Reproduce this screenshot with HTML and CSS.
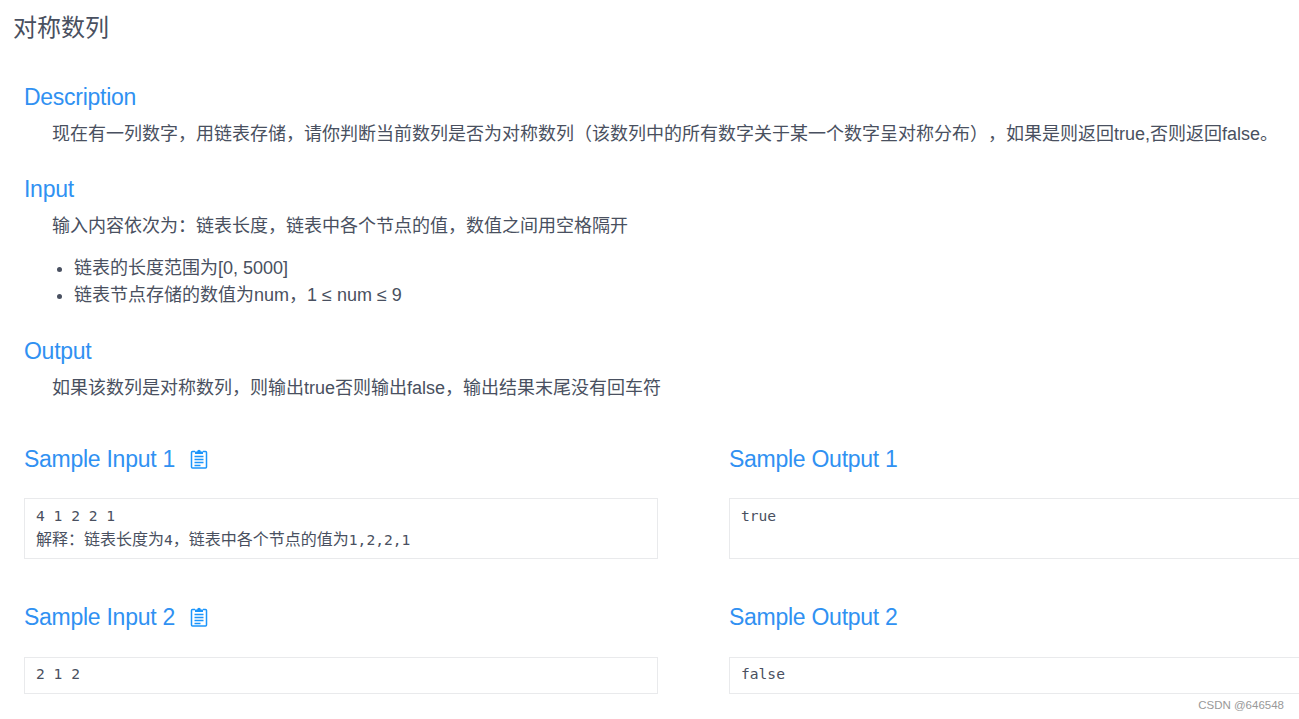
FILE: index.html
```html
<!DOCTYPE html>
<html lang="zh">
<head>
<meta charset="utf-8">
<title>对称数列</title>
<link rel="stylesheet" href="styles.css">
</head>
<body>
<main class="panel">
  <h1 class="title">对称数列</h1>
  <div class="content">
    <section class="block">
      <h2 class="heading">Description</h2>
      <p class="text">现在有一列数字，用链表存储，请你判断当前数列是否为对称数列（该数列中的所有数字关于某一个数字呈对称分布），如果是则返回true,否则返回false。</p>
    </section>
    <section class="block">
      <h2 class="heading">Input</h2>
      <p class="text">输入内容依次为：链表长度，链表中各个节点的值，数值之间用空格隔开</p>
      <ul class="list">
        <li>链表的长度范围为[0, 5000]</li>
        <li>链表节点存储的数值为num，1 ≤ num ≤ 9</li>
      </ul>
    </section>
    <section class="block">
      <h2 class="heading">Output</h2>
      <p class="text">如果该数列是对称数列，则输出true否则输出false，输出结果末尾没有回车符</p>
    </section>
    <div class="samples first">
      <div class="sample">
        <h2 class="sample-heading">Sample Input 1
          <svg class="clip" viewBox="0 0 18 21" width="18" height="21" aria-hidden="true"><path d="M5 3.5H2.5A1 1 0 0 0 1.5 4.5V19A1 1 0 0 0 2.5 20H15.5A1 1 0 0 0 16.5 19V4.5A1 1 0 0 0 15.5 3.5H13" fill="none" stroke="#1b95fb" stroke-width="1.5"/><path d="M5 6V3.5H7.2A1.8 1.8 0 0 1 10.8 3.5H13V6Z" fill="#1b95fb"/><path d="M4.5 8.5H13.5M4.5 11.5H13.5M4.5 14.5H13.5M4.5 17.5H10.5" stroke="#1b95fb" stroke-width="1.3"/></svg>
        </h2>
        <pre class="code tall"><span class="latin">4 1 2 2 1</span>
解释：链表长度为<span class="latin">4</span>，链表中各个节点的值为<span class="latin">1,2,2,1</span></pre>
      </div>
      <div class="sample">
        <h2 class="sample-heading">Sample Output 1</h2>
        <pre class="code tall"><span class="latin">true</span></pre>
      </div>
    </div>
    <div class="samples second">
      <div class="sample">
        <h2 class="sample-heading">Sample Input 2
          <svg class="clip" viewBox="0 0 18 21" width="18" height="21" aria-hidden="true"><path d="M5 3.5H2.5A1 1 0 0 0 1.5 4.5V19A1 1 0 0 0 2.5 20H15.5A1 1 0 0 0 16.5 19V4.5A1 1 0 0 0 15.5 3.5H13" fill="none" stroke="#1b95fb" stroke-width="1.5"/><path d="M5 6V3.5H7.2A1.8 1.8 0 0 1 10.8 3.5H13V6Z" fill="#1b95fb"/><path d="M4.5 8.5H13.5M4.5 11.5H13.5M4.5 14.5H13.5M4.5 17.5H10.5" stroke="#1b95fb" stroke-width="1.3"/></svg>
        </h2>
        <pre class="code"><span class="latin">2 1 2</span></pre>
      </div>
      <div class="sample">
        <h2 class="sample-heading">Sample Output 2</h2>
        <pre class="code"><span class="latin">false</span></pre>
      </div>
    </div>
  </div>
</main>
<div class="watermark">CSDN @646548</div>
</body>
</html>
```
FILE: styles.css
```css
html, body {
  margin: 0;
  height: 719px;
  overflow: hidden;
  background: #fff;
}
body {
  font-family: "Liberation Sans", "Noto Sans CJK SC", sans-serif;
  color: #495060;
  text-spacing-trim: space-all;
}
.panel {
  padding: 12px 0 0 13px;
  width: 1286px;
  overflow: hidden;
}
.title {
  margin: 0;
  font-size: 24px;
  font-weight: 400;
  line-height: 32px;
}
.content {
  margin: 39px 0 0 11px;
  width: 1275px;
}
.block {
  margin-bottom: 27px;
}
.heading, .sample-heading {
  margin: 0;
  font-size: 23px;
  letter-spacing: -0.27px;
  font-weight: 400;
  color: #3091f2;
  line-height: 28px;
}
.text {
  margin: 10px 0 0;
  padding-left: 28px;
  font-size: 18px;
  line-height: 27px;
  white-space: nowrap;
}
.list {
  margin: 15px 0 28px;
  padding-left: 50px;
  font-size: 18px;
  line-height: 27px;
}
.samples {
  display: flex;
  gap: 71px;
}
.samples.first {
  margin-top: 43px;
}
.samples.second {
  margin-top: 44px;
}
.sample {
  flex: 0 0 634px;
}
.sample-heading {
  display: flex;
  align-items: center;
  gap: 15px;
}
.clip {
  margin-top: -2px;
}
.code {
  margin: 25px 0 0;
  border: 1px solid #e9eaec;
  padding: 3px 11px 8px;
  font-family: "Noto Sans CJK SC", sans-serif;
  font-size: 16px;
  line-height: 24px;
  color: #495060;
}
.second .code {
  margin-top: 26px;
  padding-top: 2px;
  padding-bottom: 9px;
}
.code.tall {
  height: 48px;
}
.latin {
  font-family: "DejaVu Sans Mono", monospace;
  font-size: 14.6px;
  line-height: 14px;
}
.watermark {
  position: absolute;
  right: 15px;
  top: 698px;
  font-size: 11.5px;
  line-height: 14px;
  color: #999;
}
```
